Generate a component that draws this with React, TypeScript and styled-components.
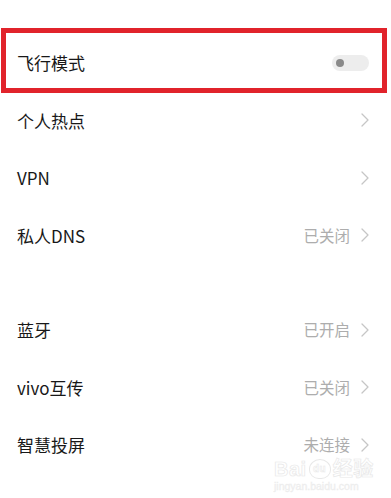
import styled, { createGlobalStyle } from 'styled-components';

const GlobalStyle = createGlobalStyle`
  html, body {
    margin: 0;
    padding: 0;
    background: #ffffff;
  }
  body {
    font-family: "Noto Sans CJK SC", "Noto Sans", sans-serif;
  }
`;

interface Item {
  title: string;
  value?: string;
  toggle?: boolean;
}

const groups: Item[][] = [
  [
    { title: '飞行模式', toggle: true },
    { title: '个人热点' },
    { title: 'VPN' },
    { title: '私人DNS', value: '已关闭' },
  ],
  [
    { title: '蓝牙', value: '已开启' },
    { title: 'vivo互传', value: '已关闭' },
    { title: '智慧投屏', value: '未连接' },
  ],
];

const Chevron = () => (
  <svg width="8" height="14" viewBox="0 0 8 14" fill="none">
    <path d="M1 1 L7 7 L1 13" stroke="#c6c6c6" strokeWidth="1.3" strokeLinecap="round" strokeLinejoin="round" />
  </svg>
);

const App = () => {
  return (
    <Page>
      <GlobalStyle />
      {groups.map((group, gi) => (
        <Group key={gi}>
          {group.map((item) => (
            <Row key={item.title}>
              <Title>{item.title}</Title>
              {item.toggle ? (
                <Switch>
                  <Knob />
                </Switch>
              ) : (
                <Right>
                  {item.value && <Value>{item.value}</Value>}
                  <Chevron />
                </Right>
              )}
            </Row>
          ))}
        </Group>
      ))}
      <Highlight />
      <Watermark>
        <MarkLogo>
          Bai<Paw>du</Paw>经验
        </MarkLogo>
        <MarkUrl>jingyan.baidu.com</MarkUrl>
      </Watermark>
    </Page>
  );
};

export default App;

const Page = styled.div`
  position: relative;
  width: 391px;
  height: 498px;
  overflow: hidden;
  background: #ffffff;
  padding-top: 34px;
  box-sizing: border-box;
  display: flex;
  flex-direction: column;
  gap: 37px;
`;

const Group = styled.div`
  display: flex;
  flex-direction: column;
`;

const Row = styled.div`
  height: 57.5px;
  display: flex;
  align-items: center;
  justify-content: space-between;
  padding: 0 22px 0 17px;
`;

const Title = styled.span`
  font-size: 17px;
  color: #181818;
  line-height: 1;
`;

const Right = styled.div`
  display: flex;
  align-items: center;
  gap: 11px;
`;

const Value = styled.span`
  font-size: 15.5px;
  color: #adadad;
  line-height: 1;
`;

const Switch = styled.div`
  width: 37px;
  height: 16px;
  border-radius: 8px;
  background: #ededed;
  display: flex;
  align-items: center;
  padding-left: 4px;
  box-sizing: border-box;
`;

const Knob = styled.div`
  width: 8px;
  height: 8px;
  border-radius: 50%;
  background: #8a8a8a;
`;

const Highlight = styled.div`
  position: absolute;
  left: 1px;
  top: 28px;
  width: 386px;
  height: 65px;
  border: 5px solid #e1232b;
  box-sizing: border-box;
  pointer-events: none;
`;

const Watermark = styled.div`
  position: absolute;
  left: 274px;
  top: 459px;
  display: flex;
  flex-direction: column;
  align-items: flex-start;
  font-family: "Liberation Sans", "Noto Sans CJK SC", sans-serif;
  color: transparent;
  pointer-events: none;
`;

const MarkLogo = styled.div`
  display: flex;
  align-items: center;
  font-size: 20px;
  font-weight: 700;
  line-height: 20px;
  -webkit-text-stroke: 0.7px #e8e8e8;
  letter-spacing: 0.5px;
`;

const Paw = styled.span`
  display: inline-flex;
  align-items: center;
  justify-content: center;
  width: 20px;
  height: 18px;
  margin: 0 2px;
  border: 1px solid #e8e8e8;
  border-radius: 50% 50% 45% 45%;
  font-size: 10px;
  line-height: 1;
  -webkit-text-stroke: 0.5px #e8e8e8;
`;

const MarkUrl = styled.div`
  margin-top: 2px;
  font-size: 10.5px;
  line-height: 11px;
  color: #f0f0f0;
  -webkit-text-stroke: 0.3px #ececec;
`;
